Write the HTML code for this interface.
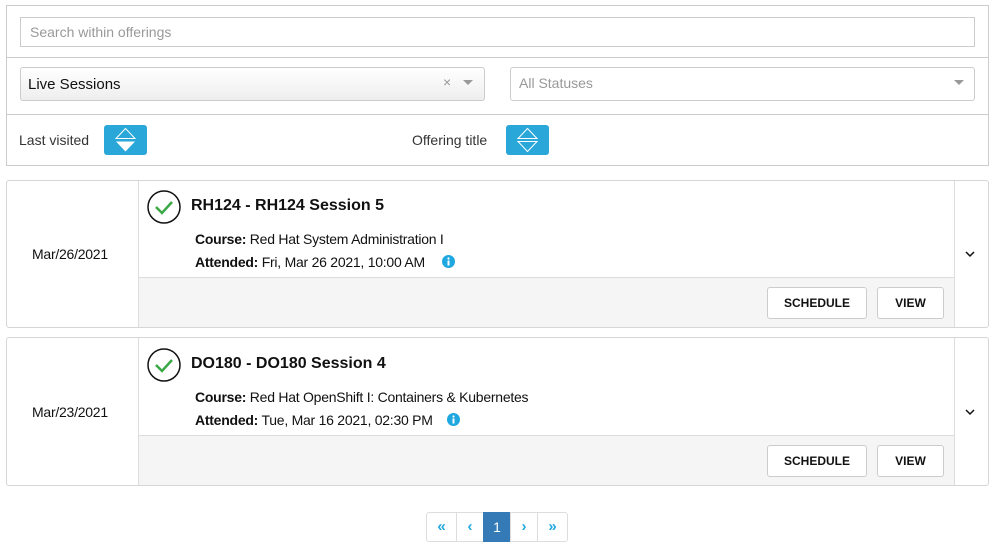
<html><head><style>
body{margin:0;background:#fff;font-family:"Liberation Sans",sans-serif;color:#111;width:999px;height:549px;position:relative;overflow:hidden}
.a{position:absolute;box-sizing:border-box}
.ph{color:#999;font-size:14px}
.sortb{background:#2aa7d9;border-radius:3px;width:43px;height:30px}
.card{border:1px solid #d6d6d6;border-radius:3px}
.btn{border:1px solid #ccc;border-radius:3px;background:#fff;font-weight:bold;font-size:12px;text-align:center;line-height:30px}
.pg{border:1px solid #ddd;height:30px;top:512px;text-align:center;line-height:28px;color:#1fa7e0;font-weight:bold;font-size:15px}
.ln{font-size:14px;letter-spacing:-0.25px}
</style></head><body>
<div class="a" style="left:6px;top:5px;width:983px;height:161px;border:1px solid #ccc"></div>
<div class="a" style="left:20px;top:17px;width:955px;height:30px;border:1px solid #ccc"></div>
<div class="a ph" style="left:30px;top:24px">Search within offerings</div>
<div class="a" style="left:7px;top:57px;width:981px;height:1px;background:#ccc"></div>
<div class="a" style="left:20px;top:67px;width:465px;height:34px;border:1px solid #ccc;border-radius:3px;background:linear-gradient(#fff,#eee)"></div>
<div class="a" style="left:28px;top:76px;font-size:15px">Live Sessions</div>
<div class="a" style="left:443px;top:74px;color:#999;font-size:14px">×</div>
<div class="a" style="left:463px;top:80px;border:5px solid transparent;border-top-color:#999;border-bottom:0"></div>
<div class="a" style="left:510px;top:67px;width:465px;height:34px;border:1px solid #ccc;border-radius:3px"></div>
<div class="a ph" style="left:519px;top:75px">All Statuses</div>
<div class="a" style="left:954px;top:80px;border:5px solid transparent;border-top-color:#999;border-bottom:0"></div>
<div class="a" style="left:7px;top:114px;width:981px;height:1px;background:#ccc"></div>
<div class="a" style="left:19px;top:132px;font-size:14px;color:#333">Last visited</div>
<div class="a sortb" style="left:104px;top:125px"><svg width="43" height="30"><path d="M21.5 3.5L31 13.5H12Z" fill="none" stroke="#fff"/><path d="M12 16.5H31L21.5 26.5Z" fill="#fff"/></svg></div>
<div class="a" style="left:412px;top:132px;font-size:14px;color:#333">Offering title</div>
<div class="a sortb" style="left:506px;top:125px"><svg width="43" height="30"><path d="M21.5 3.5L31 13.5H12Z" fill="none" stroke="#fff"/><path d="M12 16.5H31L21.5 26.5Z" fill="none" stroke="#fff"/></svg></div>

<!-- card1 -->
<div class="a card" style="left:6px;top:180px;width:983px;height:148px"></div>
<div class="a" style="left:138px;top:181px;width:1px;height:146px;background:#ddd"></div>
<div class="a" style="left:954px;top:181px;width:1px;height:146px;background:#ddd"></div>
<div class="a" style="left:139px;top:277px;width:815px;height:50px;background:#f5f5f5;border-top:1px solid #ddd"></div>
<div class="a ln" style="left:32px;top:246px">Mar/26/2021</div>
<svg class="a" style="left:147px;top:190px" width="35" height="35"><circle cx="17" cy="17" r="16" fill="none" stroke="#111" stroke-width="1.5"/><path d="M9 17l6 6 10-11" fill="none" stroke="#3aa845" stroke-width="2.5"/></svg>
<div class="a" style="left:191px;top:197px;font-size:16px;font-weight:bold">RH124 - RH124 Session 5</div>
<div class="a ln" style="left:195px;top:231px"><b>Course:</b> Red Hat System Administration I</div>
<div class="a ln" style="left:195px;top:254px"><b>Attended:</b> Fri, Mar 26 2021, 10:00 AM</div>
<svg class="a" style="left:442px;top:255px" width="13" height="13"><circle cx="6.5" cy="6.5" r="6.5" fill="#1fa7e0"/><rect x="5.5" y="5.5" width="2" height="5" fill="#fff"/><circle cx="6.5" cy="3.5" r="1.1" fill="#fff"/></svg>
<svg class="a" style="left:965px;top:250px" width="10" height="8"><path d="M1 2l4 4 4-4" fill="none" stroke="#111" stroke-width="1.5"/></svg>
<div class="a btn" style="left:767px;top:287px;width:100px;height:32px">SCHEDULE</div>
<div class="a btn" style="left:877px;top:287px;width:67px;height:32px">VIEW</div>

<!-- card2 -->
<div class="a card" style="left:6px;top:337px;width:983px;height:149px"></div>
<div class="a" style="left:138px;top:338px;width:1px;height:147px;background:#ddd"></div>
<div class="a" style="left:954px;top:338px;width:1px;height:147px;background:#ddd"></div>
<div class="a" style="left:139px;top:435px;width:815px;height:50px;background:#f5f5f5;border-top:1px solid #ddd"></div>
<div class="a ln" style="left:32px;top:404px">Mar/23/2021</div>
<svg class="a" style="left:147px;top:348px" width="35" height="35"><circle cx="17" cy="17" r="16" fill="none" stroke="#111" stroke-width="1.5"/><path d="M9 17l6 6 10-11" fill="none" stroke="#3aa845" stroke-width="2.5"/></svg>
<div class="a" style="left:191px;top:355px;font-size:16px;font-weight:bold">DO180 - DO180 Session 4</div>
<div class="a ln" style="left:195px;top:389px"><b>Course:</b> Red Hat OpenShift I: Containers &amp; Kubernetes</div>
<div class="a ln" style="left:195px;top:412px"><b>Attended:</b> Tue, Mar 16 2021, 02:30 PM</div>
<svg class="a" style="left:447px;top:413px" width="13" height="13"><circle cx="6.5" cy="6.5" r="6.5" fill="#1fa7e0"/><rect x="5.5" y="5.5" width="2" height="5" fill="#fff"/><circle cx="6.5" cy="3.5" r="1.1" fill="#fff"/></svg>
<svg class="a" style="left:965px;top:408px" width="10" height="8"><path d="M1 2l4 4 4-4" fill="none" stroke="#111" stroke-width="1.5"/></svg>
<div class="a btn" style="left:767px;top:445px;width:100px;height:32px">SCHEDULE</div>
<div class="a btn" style="left:877px;top:445px;width:67px;height:32px">VIEW</div>

<!-- pagination -->
<div class="a pg" style="left:426px;width:31px;border-radius:3px 0 0 3px">«</div>
<div class="a pg" style="left:456px;width:28px">‹</div>
<div class="a pg" style="left:483px;width:28px;background:#337ab7;border-color:#337ab7;color:#fff;font-weight:normal;font-size:14px">1</div>
<div class="a pg" style="left:510px;width:28px">›</div>
<div class="a pg" style="left:537px;width:31px;border-radius:0 3px 3px 0">»</div>
</body></html>
